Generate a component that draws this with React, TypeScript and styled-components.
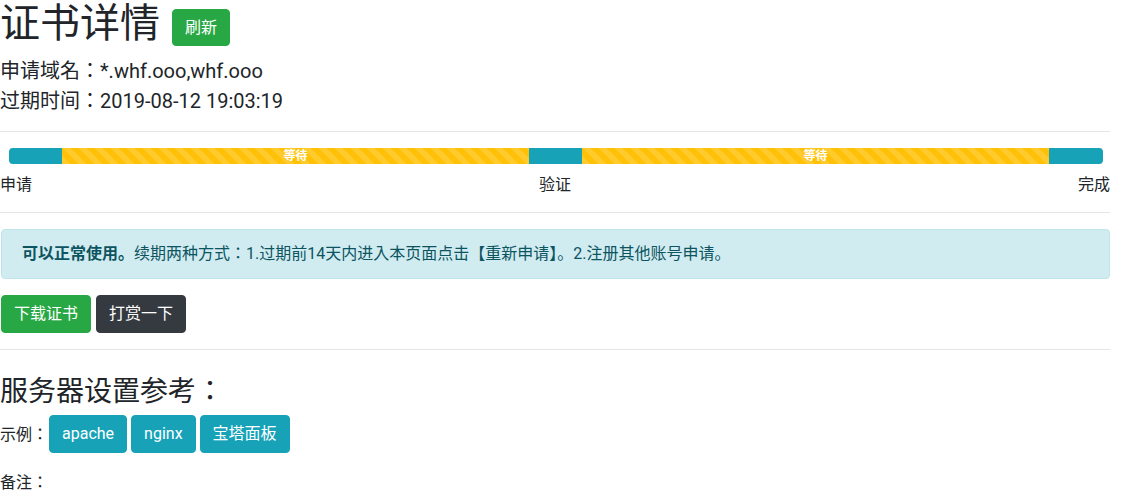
import React from "react";
import styled, { createGlobalStyle } from "styled-components";

const GlobalStyle = createGlobalStyle`
  html, body {
    margin: 0;
    padding: 0;
    background: #fff;
  }
  body {
    font-family: Roboto, "Noto Sans CJK JP", "Noto Sans CJK SC", sans-serif;
    font-size: 16px;
    line-height: 1.5;
    color: #212529;
  }
  * {
    box-sizing: border-box;
  }
`;

const Page = styled.div`
  width: 1110px;
`;

const TitleRow = styled.div`
  display: flex;
  align-items: center;
  gap: 12px;
  margin-bottom: 8px;
`;

const Title = styled.h1`
  margin: 0;
  font-size: 40px;
  font-weight: 400;
  line-height: 48px;
`;

const Button = styled.button<{ $variant: "success" | "dark" | "info" }>`
  display: inline-block;
  font-family: inherit;
  font-size: 16px;
  line-height: 24px;
  padding: 6px 12px;
  border-radius: 4px;
  border: 1px solid transparent;
  color: #fff;
  cursor: pointer;
  background-color: ${(p) =>
    p.$variant === "success" ? "#28a745" : p.$variant === "dark" ? "#343a40" : "#17a2b8"};
  border-color: ${(p) =>
    p.$variant === "success" ? "#28a745" : p.$variant === "dark" ? "#343a40" : "#17a2b8"};
`;

const RefreshButton = styled(Button)`
  margin-top: 7px;
  height: 37px;
  padding: 5px 12px;
`;

const InfoLine = styled.div`
  font-size: 20px;
  line-height: 30px;
`;

const Rule = styled.hr<{ $top?: number }>`
  margin: ${(p) => p.$top ?? 16}px 0 16px;
  border: 0;
  border-top: 1px solid rgba(0, 0, 0, 0.1);
`;

const Progress = styled.div`
  display: flex;
  height: 16px;
  margin: 0 7px 0 9px;
  overflow: hidden;
  border-radius: 4px;
  background-color: #e9ecef;
  font-size: 12px;
`;

const Bar = styled.div<{ $waiting?: boolean }>`
  display: flex;
  justify-content: center;
  align-items: center;
  color: #fff;
  font-weight: 700;
  line-height: 16px;
  white-space: nowrap;
  background-color: ${(p) => (p.$waiting ? "#ffc107" : "#17a2b8")};
  background-image: ${(p) =>
    p.$waiting
      ? "linear-gradient(45deg, rgba(255,255,255,.15) 25%, transparent 25%, transparent 50%, rgba(255,255,255,.15) 50%, rgba(255,255,255,.15) 75%, transparent 75%, transparent)"
      : "none"};
  background-size: 16px 16px;
`;

const Steps = styled.div`
  display: flex;
  justify-content: space-between;
  margin-top: 9px;
  line-height: 24px;
`;

const Alert = styled.div`
  padding: 12px 20px;
  border: 1px solid #bee5eb;
  border-radius: 4px;
  background-color: #d1ecf1;
  color: #0c5460;
  line-height: 24px;
  margin: 0 0 16px 1px;

  b {
    font-weight: 700;
  }
`;

const ButtonRow = styled.div`
  display: flex;
  gap: 5px;
  margin-left: 1px;
`;

const SubTitle = styled.h3`
  margin: 25px 0 6px;
  font-size: 28px;
  font-weight: 400;
  line-height: 34px;
`;

const ExampleRow = styled.div`
  display: flex;
  align-items: center;
  gap: 4px;
`;

const ExampleLabel = styled.span`
  margin-top: 2px;
  margin-right: -3px;
`;

const Note = styled.div`
  margin-top: 18px;
  line-height: 24px;
`;

const segments = [
  { width: 4.84, waiting: false },
  { width: 42.69, waiting: true },
  { width: 4.84, waiting: false },
  { width: 42.69, waiting: true },
  { width: 4.94, waiting: false },
];

const App = () => {
  return (
    <Page>
      <GlobalStyle />
      <TitleRow>
        <Title>证书详情</Title>
        <RefreshButton $variant="success">刷新</RefreshButton>
      </TitleRow>
      <InfoLine>申请域名：*.whf.ooo,whf.ooo</InfoLine>
      <InfoLine>过期时间：2019-08-12 19:03:19</InfoLine>
      <Rule $top={15} />
      <Progress>
        {segments.map((s, i) => (
          <Bar key={i} $waiting={s.waiting} style={{ width: `${s.width}%` }}>
            {s.waiting ? "等待" : ""}
          </Bar>
        ))}
      </Progress>
      <Steps>
        <span>申请</span>
        <span>验证</span>
        <span>完成</span>
      </Steps>
      <Rule $top={15} />
      <Alert>
        <b>可以正常使用。</b>续期两种方式：1.过期前14天内进入本页面点击【重新申请】。2.注册其他账号申请。
      </Alert>
      <ButtonRow>
        <Button $variant="success">下载证书</Button>
        <Button $variant="dark">打赏一下</Button>
      </ButtonRow>
      <Rule />
      <SubTitle>服务器设置参考：</SubTitle>
      <ExampleRow>
        <ExampleLabel>示例：</ExampleLabel>
        <Button $variant="info">apache</Button>
        <Button $variant="info">nginx</Button>
        <Button $variant="info">宝塔面板</Button>
      </ExampleRow>
      <Note>备注：</Note>
    </Page>
  );
};

export default App;
